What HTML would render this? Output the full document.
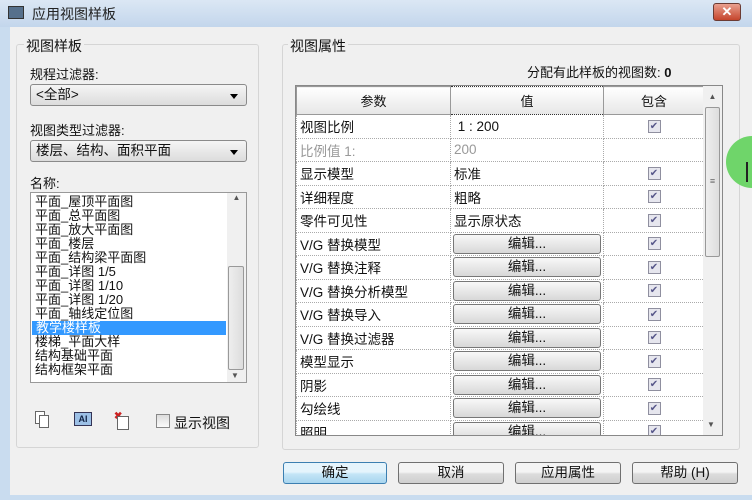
<!DOCTYPE html>
<html><head><meta charset="utf-8"><style>
*{margin:0;padding:0;box-sizing:border-box}
body{width:752px;height:500px;overflow:hidden;background:#c9dcef;font-family:"Liberation Sans","Noto Sans CJK SC",sans-serif;font-size:13px;color:#111;position:relative}
.a{position:absolute}
.title{left:0;top:0;width:752px;height:27px;background:linear-gradient(#dbe7f4,#c3d6ec)}
.body{left:10px;top:27px;width:742px;height:468px;background:#f0f0f0}
.grp{border:1px solid #d5d5d5;border-radius:3px}
.lbl{background:#f0f0f0;padding:0 2px}
.combo{border:1px solid #8a8a8a;border-radius:3px;background:linear-gradient(#f5f5f5,#dcdcdc);height:22px;padding:0 5px;line-height:20px;font-size:13.5px}
.combo:after{content:"";position:absolute;right:8px;top:9px;border:4px solid transparent;border-top:5px solid #000}
.list div{height:14px;line-height:14px;font-size:13px;padding-left:4px;white-space:nowrap}
.btn{border:1px solid #707070;border-radius:3px;background:linear-gradient(#f4f4f4 45%,#dcdcdc 55%,#cfcfcf);text-align:center;font-size:13.5px;line-height:20px;height:22px}
table{border-collapse:collapse;table-layout:fixed}
td{border:1px dotted #aaa;height:23.5px;padding:0 3px;font-size:13.5px;white-space:nowrap;overflow:hidden}
th{height:28px;border:1px solid #999;background:linear-gradient(#fff,#e6e6e6);font-weight:normal;font-size:13px}
.cb{display:block;margin:0 auto;width:13px;height:13px;border:1px solid #8f8f9f;background:#e6e6ee;color:#57578a;font-size:10px;line-height:11px;text-align:center}
.eb{border:1px solid #777;border-radius:3px;background:linear-gradient(#f8f8f8,#d8d8d8);text-align:center;height:20px;line-height:18px;margin:0 -1px}
</style></head><body>
<div class="a title"></div>
<div class="a" style="left:8px;top:6px;width:16px;height:13px;background:#56708c;border:1px solid #333"></div>
<div class="a" style="left:32px;top:4px;font-size:14px;color:#222">应用视图样板</div>
<div class="a" style="left:713px;top:3px;width:28px;height:18px;border-radius:3px;background:linear-gradient(#e9a08f,#c5452c);border:1px solid #6b3b33;color:#fff;font-weight:bold;text-align:center;line-height:16px;font-size:13px">✕</div>
<div class="a body"></div>

<div class="a grp" style="left:16px;top:44px;width:243px;height:404px"></div>
<div class="a lbl" style="left:24px;top:36px;font-size:14px">视图样板</div>
<div class="a" style="left:30px;top:64px">规程过滤器:</div>
<div class="a combo" style="left:30px;top:84px;width:217px">&lt;全部&gt;</div>
<div class="a" style="left:30px;top:120px">视图类型过滤器:</div>
<div class="a combo" style="left:30px;top:140px;width:217px">楼层、结构、面积平面</div>
<div class="a" style="left:30px;top:173px">名称:</div>
<div class="a list" style="left:30px;top:192px;width:217px;height:191px;border:1px solid #999;background:#fff;padding-top:2px">
<div>平面_屋顶平面图</div><div>平面_总平面图</div><div>平面_放大平面图</div><div>平面_楼层</div><div>平面_结构梁平面图</div><div>平面_详图 1/5</div><div>平面_详图 1/10</div><div>平面_详图 1/20</div><div>平面_轴线定位图</div><div style="background:#3399ff;color:#fff;width:194px;margin-left:1px">教学楼样板</div><div>楼梯_平面大样</div><div>结构基础平面</div><div>结构框架平面</div>
</div>
<div class="a" style="left:227px;top:193px;width:19px;height:189px;background:#f0f0f0;font-size:8px;color:#555;text-align:center">▲</div>
<div class="a" style="left:228px;top:266px;width:16px;height:104px;border:1px solid #999;border-radius:2px;background:linear-gradient(90deg,#eee,#ddd)"></div>
<div class="a" style="left:231px;top:371px;font-size:8px;color:#555">▼</div>
<div class="a" style="left:35px;top:411px;width:10px;height:13px;border:1px solid #666;background:#fff"></div>
<div class="a" style="left:39px;top:415px;width:10px;height:13px;border:1px solid #666;background:#fff"></div>
<div class="a" style="left:74px;top:412px;width:18px;height:14px;border:1px solid #335;background:#9cc0e6;font-size:9px;font-weight:bold;color:#124;text-align:center;line-height:12px">AI</div>
<div class="a" style="left:114px;top:411px;color:#c22;font-size:10px;font-weight:bold">✖</div>
<div class="a" style="left:117px;top:416px;width:12px;height:14px;border:1px solid #666;background:#fff"></div>
<div class="a" style="left:156px;top:414px;width:14px;height:14px;border:1px solid #888;background:linear-gradient(#ddd,#fafafa)"></div>
<div class="a" style="left:174px;top:413px;font-size:14px">显示视图</div>

<div class="a grp" style="left:282px;top:44px;width:458px;height:406px"></div>
<div class="a lbl" style="left:288px;top:36px;font-size:14px">视图属性</div>
<div class="a" style="left:527px;top:62px">分配有此样板的视图数: <b>0</b></div>
<div class="a" style="left:295px;top:85px;width:428px;height:351px;border:1px solid #888;background:#fff;overflow:hidden">
<table style="width:408px">
<col style="width:154px"><col style="width:153px"><col style="width:101px">
<tr><th>参数</th><th style="border:1px dotted #333">值</th><th>包含</th></tr>
<tr><td>视图比例</td><td>&nbsp;1 : 200</td><td><span class="cb">✔</span></td></tr>
<tr><td style="color:#999">比例值 1:</td><td style="color:#999">200</td><td></td></tr>
<tr><td>显示模型</td><td>标准</td><td><span class="cb">✔</span></td></tr>
<tr><td>详细程度</td><td>粗略</td><td><span class="cb">✔</span></td></tr>
<tr><td>零件可见性</td><td>显示原状态</td><td><span class="cb">✔</span></td></tr>
<tr><td>V/G 替换模型</td><td><div class="eb">编辑...</div></td><td><span class="cb">✔</span></td></tr>
<tr><td>V/G 替换注释</td><td><div class="eb">编辑...</div></td><td><span class="cb">✔</span></td></tr>
<tr><td>V/G 替换分析模型</td><td><div class="eb">编辑...</div></td><td><span class="cb">✔</span></td></tr>
<tr><td>V/G 替换导入</td><td><div class="eb">编辑...</div></td><td><span class="cb">✔</span></td></tr>
<tr><td>V/G 替换过滤器</td><td><div class="eb">编辑...</div></td><td><span class="cb">✔</span></td></tr>
<tr><td>模型显示</td><td><div class="eb">编辑...</div></td><td><span class="cb">✔</span></td></tr>
<tr><td>阴影</td><td><div class="eb">编辑...</div></td><td><span class="cb">✔</span></td></tr>
<tr><td>勾绘线</td><td><div class="eb">编辑...</div></td><td><span class="cb">✔</span></td></tr>
<tr><td>照明</td><td><div class="eb">编辑...</div></td><td><span class="cb">✔</span></td></tr>
</table>
<div class="a" style="left:407px;top:0;width:19px;height:350px;background:#f0f0f0;font-size:8px;color:#555;text-align:center;padding-top:6px">▲</div>
<div class="a" style="left:409px;top:21px;width:15px;height:150px;border:1px solid #999;border-radius:2px;background:linear-gradient(90deg,#eee,#ddd);font-size:9px;text-align:center;padding-top:68px;color:#666">≡</div>
<div class="a" style="left:411px;top:334px;font-size:8px;color:#555">▼</div>
</div>
<div class="a" style="left:726px;top:136px;width:52px;height:52px;border-radius:50%;background:#6fd56a"></div>
<div class="a" style="left:746px;top:162px;width:8px;height:20px;border-left:2px solid #222"></div>

<div class="a btn" style="left:283px;top:462px;width:104px;border-color:#3c7fb1;background:linear-gradient(#e5f4fc 45%,#c4e5f6 55%,#a8d5ef)">确定</div>
<div class="a btn" style="left:398px;top:462px;width:106px">取消</div>
<div class="a btn" style="left:515px;top:462px;width:106px">应用属性</div>
<div class="a btn" style="left:632px;top:462px;width:106px">帮助 (H)</div>
</body></html>
